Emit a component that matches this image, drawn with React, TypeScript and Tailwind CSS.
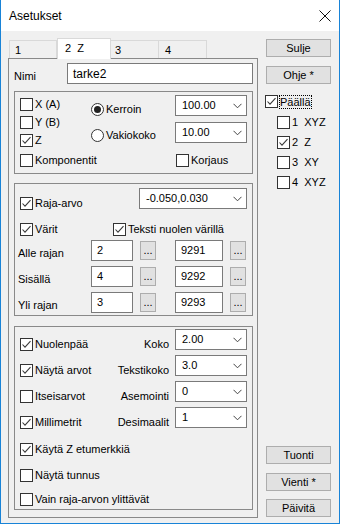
import React from 'react';

function Check({ checked }: { checked?: boolean }) {
  return (
    <span className="w-[13px] h-[13px] border border-[#333333] bg-white flex items-center justify-center shrink-0">
      {checked && (
        <svg width="11" height="11" viewBox="0 0 11 11">
          <path d="M1.5 5.5 L4 8.2 L9.5 2.2" fill="none" stroke="#3a3a3a" strokeWidth="1.1" />
        </svg>
      )}
    </span>
  );
}

function CheckLabel({ label, checked, className = '' }: { label: string; checked?: boolean; className?: string }) {
  return (
    <div className={`flex items-center gap-[2px] h-[13px] ${className}`}>
      <Check checked={checked} />
      <span className="leading-[13px] whitespace-pre">{label}</span>
    </div>
  );
}

function Radio({ label, selected }: { label: string; selected?: boolean }) {
  return (
    <div className="flex items-center gap-[2px] h-[13px]">
      <span className="w-[13px] h-[13px] rounded-full border border-[#333333] bg-white flex items-center justify-center shrink-0">
        {selected && <span className="w-[7px] h-[7px] rounded-full bg-[#222222]" />}
      </span>
      <span className="leading-[13px]">{label}</span>
    </div>
  );
}

function Combo({ value, width }: { value: string; width: string }) {
  return (
    <div className={`${width} h-[21px] border border-[#7a7a7a] bg-white flex items-center justify-between pl-[6px] pr-[4px] shrink-0`}>
      <span className="leading-[13px]">{value}</span>
      <svg width="9" height="6" viewBox="0 0 9 6">
        <path d="M0.5 0.8 L4.5 4.8 L8.5 0.8" fill="none" stroke="#444" strokeWidth="1" />
      </svg>
    </div>
  );
}

function TextBox({ value, width }: { value: string; width: string }) {
  return (
    <div className={`${width} h-[21px] border border-[#7a7a7a] bg-white flex items-center pl-[5px] shrink-0`}>
      <span className="leading-[13px]">{value}</span>
    </div>
  );
}

function Dots({ className = '' }: { className?: string }) {
  return (
    <div className={`w-[16px] h-[19px] mt-[1px] border border-[#adadad] bg-[#e1e1e1] flex items-center justify-center shrink-0 ${className}`}>
      <span className="leading-[13px] -mt-[1px]">...</span>
    </div>
  );
}

function Button({ label, className = '' }: { label: string; className?: string }) {
  return (
    <div className={`w-[65px] h-[18px] border border-[#adadad] bg-[#e1e1e1] flex items-center justify-center ${className}`}>
      <span className="leading-[13px] whitespace-pre">{label}</span>
    </div>
  );
}

const limits = [
  { label: 'Alle rajan', a: '2', b: '9291' },
  { label: 'Sisällä', a: '4', b: '9292' },
  { label: 'Yli rajan', a: '3', b: '9293' },
];

const arrows = [
  { label: 'Nuolenpää', checked: true, field: 'Koko', value: '2.00' },
  { label: 'Näytä arvot', checked: true, field: 'Tekstikoko', value: '3.0' },
  { label: 'Itseisarvot', checked: false, field: 'Asemointi', value: '0' },
  { label: 'Millimetrit', checked: true, field: 'Desimaalit', value: '1' },
];

export default function App() {
  return (
    <div className="w-[340px] h-[524px] flex flex-col border-x border-b border-[#1883d7] bg-white text-[11px] text-black font-['Liberation_Sans',Arial,sans-serif]">
      {/* title bar */}
      <div className="h-[31px] shrink-0 bg-white flex items-center justify-between pl-[8px] pr-[8px]">
        <span className="text-[12px] leading-[16px]">Asetukset</span>
        <svg width="12" height="12" viewBox="0 0 12 12">
          <path d="M0.5 0.5 L11.5 11.5 M11.5 0.5 L0.5 11.5" stroke="#111" strokeWidth="1" />
        </svg>
      </div>

      <div className="flex-1 bg-[#f0f0f0] flex pl-[7px]">
        {/* left: tabs + panel */}
        <div className="w-[250px] flex flex-col pt-[7px]">
          <div className="h-[20px] flex items-end pl-[1px]">
            <div className="w-[48px] h-[18px] border border-b-0 border-[#d9d9d9] pl-[5px] pt-[3px] leading-[13px]">1</div>
            <div className="relative z-10 w-[54px] h-[21px] -mb-[1px] border border-b-0 border-[#d9d9d9] bg-white pl-[7px] pt-[3px] leading-[13px] whitespace-pre">2  Z</div>
            <div className="w-[48px] h-[18px] border border-b-0 border-l-0 border-[#d9d9d9] pl-[4px] pt-[3px] leading-[13px]">3</div>
            <div className="w-[48px] h-[18px] border border-b-0 border-l-0 border-[#d9d9d9] pl-[6px] pt-[3px] leading-[13px]">4</div>
          </div>

          <div className="flex-1 mb-[5px] border border-[#898989] flex flex-col pl-[5px]">
            {/* Nimi */}
            <div className="flex items-start mt-[4px]">
              <span className="w-[53px] mt-[7px] leading-[13px]">Nimi</span>
              <div className="w-[186px] h-[21px] border border-[#7a7a7a] bg-white flex items-center pl-[5px]">
                <span className="text-[12px] leading-[14px]">tarke2</span>
              </div>
            </div>

            {/* group 1 */}
            <div className="w-[239px] h-[83px] mt-[7px] border border-[#898989] flex flex-col pl-[5px]">
              <div className="flex">
                <div className="w-[71px] flex flex-col pt-[6px] gap-[5px]">
                  <CheckLabel label="X (A)" />
                  <CheckLabel label="Y (B)" />
                  <CheckLabel label="Z" checked />
                </div>
                <div className="w-[84px] flex flex-col pt-[11px] gap-[13px]">
                  <Radio label="Kerroin" selected />
                  <Radio label="Vakiokoko" />
                </div>
                <div className="flex flex-col pt-[3px] gap-[6px]">
                  <Combo value="100.00" width="w-[72px]" />
                  <Combo value="10.00" width="w-[72px]" />
                </div>
              </div>
              <div className="flex mt-[7px]">
                <CheckLabel label="Komponentit" className="w-[156px]" />
                <CheckLabel label="Korjaus" />
              </div>
            </div>

            {/* group 2 */}
            <div className="w-[239px] h-[133px] mt-[9px] border border-[#898989] flex flex-col pl-[5px]">
              <div className="flex items-start mt-[4px]">
                <CheckLabel label="Raja-arvo" checked className="w-[119px] mt-[9px]" />
                <Combo value="-0.050,0.030" width="w-[108px]" />
              </div>
              <div className="flex mt-[13px]">
                <CheckLabel label="Värit" checked className="w-[93px]" />
                <CheckLabel label="Teksti nuolen värillä" checked />
              </div>
              <div className="flex flex-col mt-[4px] gap-[5px] -ml-[2px]">
                {limits.map((r) => (
                  <div key={r.label} className="flex items-start">
                    <span className="w-[73px] mt-[7px] leading-[13px]">{r.label}</span>
                    <TextBox value={r.a} width="w-[42px]" />
                    <Dots className="ml-[7px]" />
                    <TextBox value={r.b} width="w-[48px] ml-[19px]" />
                    <Dots className="ml-[7px]" />
                  </div>
                ))}
              </div>
            </div>

            {/* group 3 */}
            <div className="w-[239px] h-[184px] mt-[10px] border border-[#898989] flex flex-col pl-[5px]">
              <div className="flex flex-col mt-[2px]">
                {arrows.map((r) => (
                  <div key={r.label} className="h-[26px] flex items-start">
                    <div className="w-[155px] mt-[9px] pr-[6px] flex items-center justify-between">
                      <CheckLabel label={r.label} checked={r.checked} />
                      <span className="leading-[13px]">{r.field}</span>
                    </div>
                    <Combo value={r.value} width="w-[72px]" />
                  </div>
                ))}
              </div>
              <CheckLabel label="Käytä Z etumerkkiä" checked className="mt-[10px]" />
              <CheckLabel label="Näytä tunnus" className="mt-[13px]" />
              <CheckLabel label="Vain raja-arvon ylittävät" className="mt-[11px]" />
            </div>
          </div>
        </div>

        {/* right column */}
        <div className="w-[65px] ml-[8px] flex flex-col pt-[8px] pb-[6px]">
          <Button label="Sulje" />
          <Button label="Ohje *" className="mt-[9px]" />
          <div className="flex items-center gap-[2px] h-[13px] mt-[11px] -ml-[1px]">
            <Check checked />
            <span className="leading-[12px] outline outline-1 outline-dotted outline-black">Päällä</span>
          </div>
          <div className="flex flex-col ml-[11px] mt-[8px] gap-[7px]">
            <CheckLabel label="1  XYZ" />
            <CheckLabel label="2  Z" checked />
            <CheckLabel label="3  XY" />
            <CheckLabel label="4  XYZ" />
          </div>
          <div className="mt-auto flex flex-col">
            <Button label="Tuonti" className="h-[17px]" />
            <Button label="Vienti *" className="h-[17px] mt-[9px]" />
            <Button label="Päivitä" className="h-[17px] mt-[8px]" />
          </div>
        </div>
      </div>
    </div>
  );
}
